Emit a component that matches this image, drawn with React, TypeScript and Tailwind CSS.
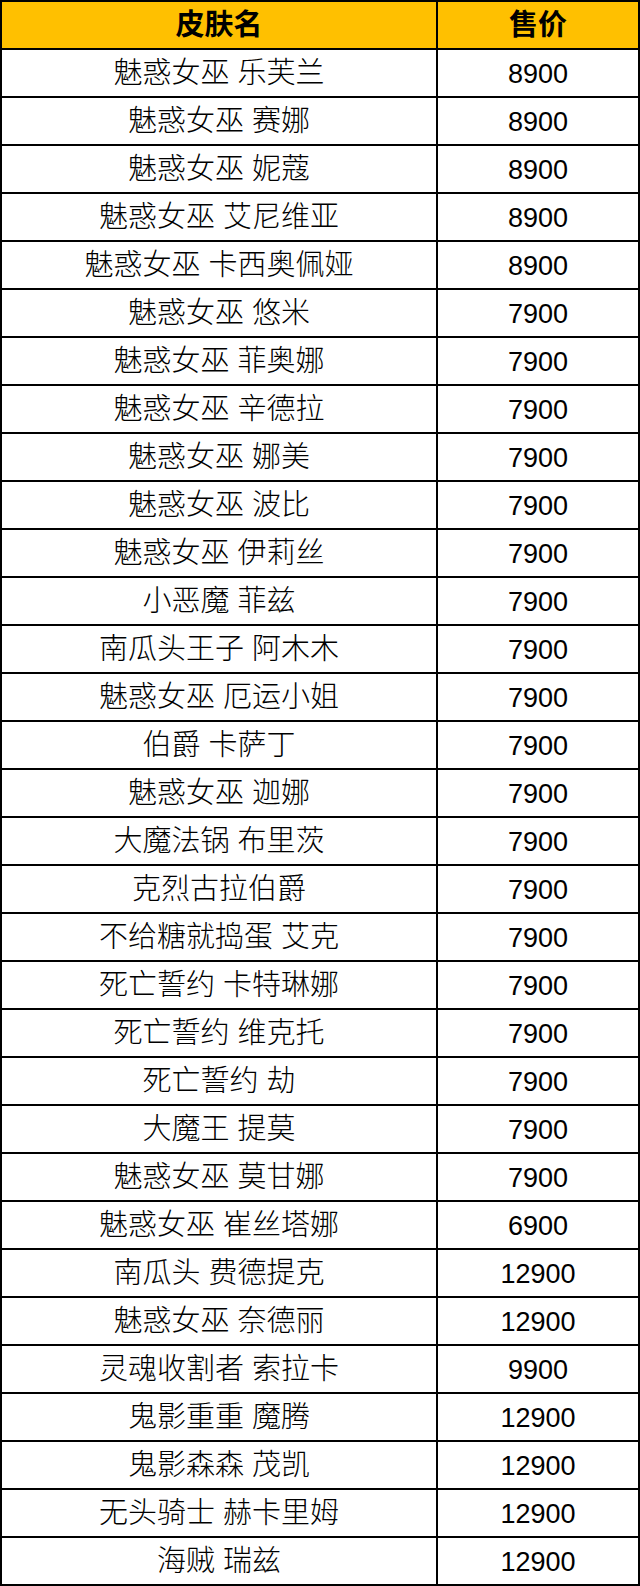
const skins: [string, string][] = [
  ["魅惑女巫 乐芙兰", "8900"],
  ["魅惑女巫 赛娜", "8900"],
  ["魅惑女巫 妮蔻", "8900"],
  ["魅惑女巫 艾尼维亚", "8900"],
  ["魅惑女巫 卡西奥佩娅", "8900"],
  ["魅惑女巫 悠米", "7900"],
  ["魅惑女巫 菲奥娜", "7900"],
  ["魅惑女巫 辛德拉", "7900"],
  ["魅惑女巫 娜美", "7900"],
  ["魅惑女巫 波比", "7900"],
  ["魅惑女巫 伊莉丝", "7900"],
  ["小恶魔 菲兹", "7900"],
  ["南瓜头王子 阿木木", "7900"],
  ["魅惑女巫 厄运小姐", "7900"],
  ["伯爵 卡萨丁", "7900"],
  ["魅惑女巫 迦娜", "7900"],
  ["大魔法锅 布里茨", "7900"],
  ["克烈古拉伯爵", "7900"],
  ["不给糖就捣蛋 艾克", "7900"],
  ["死亡誓约 卡特琳娜", "7900"],
  ["死亡誓约 维克托", "7900"],
  ["死亡誓约 劫", "7900"],
  ["大魔王 提莫", "7900"],
  ["魅惑女巫 莫甘娜", "7900"],
  ["魅惑女巫 崔丝塔娜", "6900"],
  ["南瓜头 费德提克", "12900"],
  ["魅惑女巫 奈德丽", "12900"],
  ["灵魂收割者 索拉卡", "9900"],
  ["鬼影重重 魔腾", "12900"],
  ["鬼影森森 茂凯", "12900"],
  ["无头骑士 赫卡里姆", "12900"],
  ["海贼 瑞兹", "12900"],
];

export default function App() {
  return (
    <div className="w-[640px] bg-white font-['Liberation_Sans','Noto_Sans_CJK_SC',sans-serif] text-black">
      <div className="border-l-2 border-t-2 border-black">
        <div className="flex bg-[#ffc000] text-[29px] font-bold">
          <div className="flex h-[48px] w-[436px] items-center justify-center border-b-2 border-r-2 border-black pt-[1px]">
            皮肤名
          </div>
          <div className="flex h-[48px] flex-1 items-center justify-center border-b-2 border-r-2 border-black pt-[1px]">
            售价
          </div>
        </div>
        {skins.map(([name, price]) => (
          <div key={name} className="flex font-light">
            <div className="flex h-[48px] w-[436px] items-center justify-center border-b-2 border-r-2 border-black pt-[2px] text-[29px]">
              {name}
            </div>
            <div className="flex h-[48px] flex-1 items-center justify-center border-b-2 border-r-2 border-black pt-[2px] text-[27px] font-normal">
              {price}
            </div>
          </div>
        ))}
      </div>
    </div>
  );
}
